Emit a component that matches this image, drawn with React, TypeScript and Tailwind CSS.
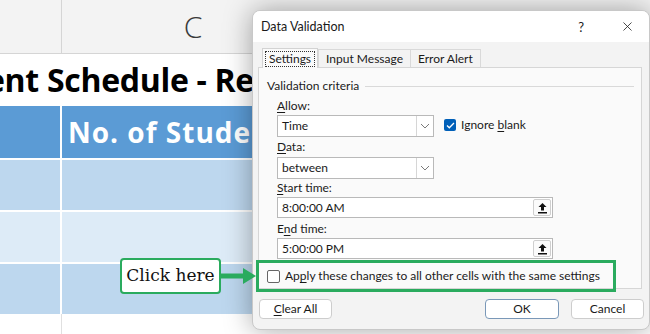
import { X } from 'lucide-react';

const ui = { fontFamily: 'Lato, "Noto Sans", sans-serif' };
const sheet = { fontFamily: '"Open Sans", "Noto Sans", sans-serif' };

const Chevron = () => (
  <svg width="10" height="6" viewBox="0 0 10 6" fill="none">
    <path d="M1 1l4 4 4-4" stroke="#7a7a7a" strokeWidth="1" />
  </svg>
);

const UpArrow = () => (
  <svg width="11" height="12" viewBox="0 0 11 12" fill="none">
    <path d="M5.5 1L1.5 5h2.5v3.5h3V5h2.5z" fill="#111" />
    <rect x="1" y="10" width="9" height="1.5" fill="#111" />
  </svg>
);

const Select = ({ value }: { value: string }) => (
  <div className="flex h-[22px] w-[157px] items-stretch border border-[#b9b9b9] bg-white">
    <span className="flex flex-1 items-center pl-[4px] text-[12px] text-[#1a1a1a]">{value}</span>
    <span className="flex w-[17px] items-center justify-center border-l border-[#d6d6d6]">
      <Chevron />
    </span>
  </div>
);

const TimeInput = ({ value }: { value: string }) => (
  <div className="flex h-[21px] w-[276px] items-stretch border border-[#b9b9b9] bg-white">
    <span className="flex flex-1 items-center pl-[4px] text-[12px] text-[#1a1a1a]">{value}</span>
    <span className="m-[1px] flex w-[18px] items-center justify-center rounded-[2px] border border-[#cfcfcf] bg-[#fbfbfb]">
      <UpArrow />
    </span>
  </div>
);

const Label = ({ first, rest }: { first: string; rest: string }) => (
  <div className="h-[16px] text-[12px] leading-[16px] text-[#1a1a1a]">
    <span className="underline underline-offset-2">{first}</span>
    {rest}
  </div>
);

const Dialog = () => (
  <div
    className="absolute left-[252px] top-[10px] flex h-[320px] w-[398px] flex-col overflow-hidden rounded-[8px] border border-[#c8c8c8] bg-[#f3f3f3] leading-[16px] shadow-[0_0_28px_rgba(0,0,0,0.35)]"
    style={ui}
  >
    <div className="flex h-[31px] items-center bg-white pl-[8px] pr-[14px]">
      <span className="flex-1 text-[12.5px] text-[#1a1a1a]">Data Validation</span>
      <span className="mr-[36px] text-[13px] text-[#1a1a1a]">?</span>
      <X size={15} strokeWidth={1.3} className="text-[#222]" />
    </div>
    <div className="flex flex-1 flex-col px-[5px] pt-[6px]">
      <div className="flex items-end pl-[4px] text-[12px] text-[#1a1a1a]">
        <div className="relative z-10 -mb-px flex h-[20px] items-center border border-b-0 border-[#d3d3d3] bg-[#fafafa] px-[2px]">
          <span className="border border-dotted border-[#333] px-[3px] leading-[14px]">Settings</span>
        </div>
        <div className="flex h-[18px] items-center border border-b-0 border-[#d9d9d9] bg-[#f3f3f3] px-[7px]">Input Message</div>
        <div className="flex h-[18px] items-center border border-b-0 border-l-0 border-[#d9d9d9] bg-[#f3f3f3] px-[7px]">Error Alert</div>
      </div>
      <div className="h-[222px] w-[384px] border border-[#d6d6d6] bg-[#fafafa] pl-[8px] pt-[10px]">
        <div className="flex h-[16px] items-center gap-[6px] pr-[7px] text-[12px] text-[#1a1a1a]">
          <span>Validation criteria</span>
          <span className="h-px flex-1 bg-[#d9d9d9]" />
        </div>
        <div className="mt-[4px] flex flex-col pl-[10px]">
          <Label first="A" rest="llow:" />
          <div className="mt-[1px] flex items-start gap-[10px]">
            <Select value="Time" />
            <div className="mt-[2px] flex items-center gap-[5px] text-[12px] text-[#1a1a1a]">
              <span className="flex h-[12px] w-[12px] items-center justify-center rounded-[2px] bg-[#005fb8]">
                <svg width="9" height="7" viewBox="0 0 9 7" fill="none">
                  <path d="M1 3.5l2.3 2.3L8 1" stroke="#fff" strokeWidth="1.3" />
                </svg>
              </span>
              <span>
                Ignore <span className="underline underline-offset-2">b</span>lank
              </span>
            </div>
          </div>
          <div className="mt-[2px]">
            <Label first="D" rest="ata:" />
          </div>
          <div className="mt-[2px]">
            <Select value="between" />
          </div>
          <div className="mt-[1px]">
            <Label first="S" rest="tart time:" />
          </div>
          <div className="mt-[1px]">
            <TimeInput value="8:00:00 AM" />
          </div>
          <div className="mt-[3px] h-[16px] text-[12px] leading-[16px] text-[#1a1a1a]">
            E<span className="underline underline-offset-2">n</span>d time:
          </div>
          <div className="mt-[1px]">
            <TimeInput value="5:00:00 PM" />
          </div>
        </div>
      </div>
      <div className="mt-[10px] flex text-[12px] text-[#1a1a1a]">
        <div className="ml-[1px] flex h-[20px] w-[73px] items-center justify-center rounded-[4px] border border-[#cdcdcd] bg-white">
          <span className="underline underline-offset-2">C</span>lear All
        </div>
        <div className="ml-auto flex h-[20px] w-[74px] items-center justify-center rounded-[4px] border border-[#7a98b8] bg-white">
          OK
        </div>
        <div className="ml-[12px] flex h-[20px] w-[73px] items-center justify-center rounded-[4px] border border-[#cdcdcd] bg-white">
          Cancel
        </div>
      </div>
    </div>
    <div className="absolute left-[3px] top-[249px] flex h-[32px] w-[360px] items-center gap-[5px] border-[3px] border-[#2aab5e] pl-[8px] text-[12px] text-[#1a1a1a]">
      <span className="h-[13px] w-[13px] rounded-[2px] border border-[#666] bg-white" />
      <span className="whitespace-nowrap">
        Ap<span className="underline underline-offset-2">p</span>ly these changes to all other cells with the same settings
      </span>
    </div>
  </div>
);

const Callout = () => (
  <div className="absolute left-[120px] top-[258px] flex items-center">
    <div
      className="flex h-[36px] w-[101px] items-center justify-center rounded-[4px] border-2 border-[#2aab5e] bg-white text-[17px] text-[#111]"
      style={{ fontFamily: '"DejaVu Serif", "Liberation Serif", serif' }}
    >
      Click here
    </div>
    <svg width="36" height="18" viewBox="0 0 36 18">
      <rect x="0" y="6.5" width="23" height="5" fill="#2aab5e" />
      <path d="M22 1l13 8-13 8z" fill="#2aab5e" />
    </svg>
  </div>
);

export default function App() {
  return (
    <div className="relative h-[334px] w-[650px] overflow-hidden bg-white" style={sheet}>
      <div className="flex h-[54px] border-b border-[#d5d5d5] bg-[#f3f3f3]">
        <div className="w-[62px] border-r border-[#d5d5d5]" />
        <div className="flex w-[262px] items-center justify-center text-[30px] font-light text-[#3a3a3a]">C</div>
      </div>
      <div className="flex h-[52px] items-center overflow-hidden whitespace-nowrap bg-white">
        <span className="-ml-[14px] text-[32px] font-bold tracking-[-0.3px] text-black">ent Schedule - Report</span>
      </div>
      <div className="flex h-[52px] bg-[#5b9bd5]">
        <div className="w-[62px] border-r-2 border-white" />
        <div className="flex items-center pl-[6px] text-[28px] font-bold tracking-[1px] whitespace-nowrap text-white">No. of Students</div>
      </div>
      {['#bdd7ee', '#ddebf7', '#bdd7ee'].map((c, i) => (
        <div key={i} className="flex h-[52px] border-t-2 border-white" style={{ backgroundColor: c }}>
          <div className="w-[62px] border-r-2 border-white" />
        </div>
      ))}
      <div className="flex h-[20px]">
        <div className="w-[62px] border-r border-[#e0e0e0]" />
      </div>
      <Dialog />
      <Callout />
    </div>
  );
}
